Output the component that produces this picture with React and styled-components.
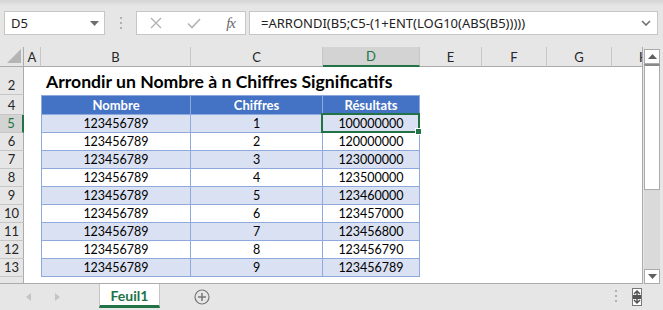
import React from 'react';
import styled, { createGlobalStyle } from 'styled-components';

const GRID = '24px 17px 150px 132px 97px 62px 65px 65px 65px';
const LETTERS = ['A', 'B', 'C', 'D', 'E', 'F', 'G', 'H'];
const ROWS = [
	['123456789', '1', '100000000'],
	['123456789', '2', '120000000'],
	['123456789', '3', '123000000'],
	['123456789', '4', '123500000'],
	['123456789', '5', '123460000'],
	['123456789', '6', '123457000'],
	['123456789', '7', '123456800'],
	['123456789', '8', '123456790'],
	['123456789', '9', '123456789'],
];

const GlobalStyle = createGlobalStyle`
	html, body {
		margin: 0;
		padding: 0;
		background: #e6e6e6;
	}
	* { box-sizing: border-box; }
`;

export default function App() {
	return (
		<Window>
			<GlobalStyle />
			<FormulaBar>
				<NameBox>
					<span>D5</span>
					<svg width="9" height="5" viewBox="0 0 9 5"><path d="M0 0h9L4.5 5z" fill="#6f6f6f" /></svg>
				</NameBox>
				<Grip><i /><i /><i /></Grip>
				<IconBox>
					<svg width="12" height="12" viewBox="0 0 12 12"><path d="M1 1l10 10M11 1L1 11" stroke="#b3b3b3" strokeWidth="1.4" /></svg>
					<svg width="14" height="12" viewBox="0 0 14 12"><path d="M1 6.5l4 4L13 2" stroke="#b3b3b3" strokeWidth="1.6" fill="none" /></svg>
					<Fx>fx</Fx>
				</IconBox>
				<FormulaInput>
					<span>=ARRONDI(B5;C5-(1+ENT(LOG10(ABS(B5)))))</span>
					<svg width="10" height="6" viewBox="0 0 10 6"><path d="M1 1l4 4 4-4" stroke="#6f6f6f" strokeWidth="1.6" fill="none" /></svg>
				</FormulaInput>
			</FormulaBar>

			<SheetArea>
				<Grid>
					<Row $h={20}>
						<Corner><svg width="14" height="14" viewBox="0 0 14 14"><path d="M14 0v14H0z" fill="#b5b5b5" /></svg></Corner>
						{LETTERS.map((l) => (
							<ColHead key={l} $active={l === 'D'}>{l}</ColHead>
						))}
					</Row>
					<Row $h={28}>
						<RowHead>2</RowHead>
						<Cell />
						<Title>Arrondir un Nombre à n Chiffres Significatifs</Title>
					</Row>
					<Row $h={20}>
						<RowHead>4</RowHead>
						<Cell />
						<HeadCell $first>Nombre</HeadCell>
						<HeadCell>Chiffres</HeadCell>
						<HeadCell>Résultats</HeadCell>
					</Row>
					{ROWS.map((r, i) => (
						<Row $h={18} key={i}>
							<RowHead $active={i === 0}>{i + 5}</RowHead>
							<Cell />
							<DataCell $band={i % 2 === 0} $first>{r[0]}</DataCell>
							<DataCell $band={i % 2 === 0}>{r[1]}</DataCell>
							<DataCell $band={i % 2 === 0} $selected={i === 0}>{r[2]}</DataCell>
						</Row>
					))}
					<Row $h={7}>
						<RowHead />
					</Row>
				</Grid>
				<VScroll>
					<ScrollBtn><svg width="9" height="5" viewBox="0 0 9 5"><path d="M0 5h9L4.5 0z" fill="#606060" /></svg></ScrollBtn>
					<Thumb />
					<Track />
					<ScrollBtn><svg width="9" height="5" viewBox="0 0 9 5"><path d="M0 0h9L4.5 5z" fill="#606060" /></svg></ScrollBtn>
				</VScroll>
			</SheetArea>

			<TabBar>
				<NavArrows>
					<svg width="5" height="8" viewBox="0 0 5 8"><path d="M5 0v8L0 4z" fill="#c4c4c4" /></svg>
					<svg width="5" height="8" viewBox="0 0 5 8"><path d="M0 0v8l5-4z" fill="#c4c4c4" /></svg>
				</NavArrows>
				<Tab>Feuil1</Tab>
				<AddSheet>
					<svg width="16" height="16" viewBox="0 0 16 16">
						<circle cx="8" cy="8" r="7" fill="none" stroke="#777" strokeWidth="1.2" />
						<path d="M8 4v8M4 8h8" stroke="#777" strokeWidth="1.5" />
					</svg>
				</AddSheet>
				<Spacer />
				<Grip $h><i /><i /><i /></Grip>
				<SplitIcon>
					<svg width="10" height="18" viewBox="0 0 10 18">
						<rect x="0.5" y="0.5" width="9" height="17" fill="#fff" stroke="#777" />
						<path d="M5 3v12M2 6l3-3 3 3M2 12l3 3 3-3" stroke="#555" strokeWidth="1.5" fill="none" />
						<rect x="1" y="7" width="8" height="4" fill="#555" />
					</svg>
				</SplitIcon>
			</TabBar>
		</Window>
	);
}

const Window = styled.div`
	width: 663px;
	height: 310px;
	display: flex;
	flex-direction: column;
	overflow: hidden;
	background: #e6e6e6;
	font-family: Lato, "Liberation Sans", sans-serif;
`;

const FormulaBar = styled.div`
	height: 47px;
	display: flex;
	align-items: flex-start;
	padding: 11px 5px 0 4px;
	background: linear-gradient(#d4d4d4 0px, #e6e6e6 6px);
`;

const NameBox = styled.div`
	width: 101px;
	height: 24px;
	background: #fff;
	border: 1px solid #c6c6c6;
	display: flex;
	align-items: center;
	justify-content: space-between;
	padding: 0 5px 0 6px;
	font-family: "Noto Sans", sans-serif;
	font-size: 13px;
	color: #222;
`;

const Grip = styled.div`
	width: ${(p) => (p.$h ? '4px' : '31px')};
	height: 24px;
	display: flex;
	flex-direction: column;
	align-items: center;
	justify-content: center;
	gap: 3px;
	margin-right: ${(p) => (p.$h ? '14px' : '0')};

	i {
		width: 2px;
		height: 2px;
		background: #b0b0b0;
	}
`;

const IconBox = styled.div`
	width: 110px;
	height: 24px;
	background: #fff;
	border: 1px solid #c6c6c6;
	display: flex;
	align-items: center;
	justify-content: space-between;
	padding: 0 10px 0 13px;
	margin-right: 3px;
`;

const Fx = styled.span`
	font-family: "Liberation Serif", serif;
	font-style: italic;
	font-size: 15px;
	color: #666;
	letter-spacing: -1px;
`;

const FormulaInput = styled.div`
	flex: 1;
	height: 24px;
	background: #fff;
	border: 1px solid #c6c6c6;
	display: flex;
	align-items: center;
	justify-content: space-between;
	padding: 0 6px 0 11px;
	font-family: "Noto Sans", sans-serif;
	font-size: 13px;
	color: #222;
`;

const SheetArea = styled.div`
	height: 237px;
	display: flex;
`;

const Grid = styled.div`
	width: 643px;
	overflow: hidden;
	background: #fff;
	border-right: 1px solid #ababab;
	border-bottom: 1px solid #ababab;
`;

const Row = styled.div`
	display: grid;
	grid-template-columns: ${GRID};
	height: ${(p) => p.$h}px;
	width: 677px;
`;

const Corner = styled.div`
	background: #e6e6e6;
	border-right: 1px solid #ababab;
	border-bottom: 1px solid #ababab;
	display: flex;
	align-items: flex-end;
	justify-content: flex-end;
	padding: 0 2px 3px 0;
`;

const ColHead = styled.div`
	background: ${(p) => (p.$active ? '#d3d3d3' : '#e6e6e6')};
	color: ${(p) => (p.$active ? '#217346' : '#262626')};
	border-right: 1px solid #c6c6c6;
	border-bottom: ${(p) => (p.$active ? '2px solid #217346' : '1px solid #ababab')};
	display: flex;
	align-items: center;
	justify-content: center;
	font-size: 13px;
`;

const RowHead = styled.div`
	background: ${(p) => (p.$active ? '#d3d3d3' : '#e6e6e6')};
	color: ${(p) => (p.$active ? '#217346' : '#262626')};
	border-right: ${(p) => (p.$active ? '2px solid #217346' : '1px solid #ababab')};
	border-bottom: 1px solid #c6c6c6;
	display: flex;
	align-items: flex-end;
	justify-content: center;
	padding-bottom: 1px;
	font-size: 13px;
`;

const Cell = styled.div``;

const Title = styled.div`
	grid-column: 3 / span 7;
	display: flex;
	align-items: flex-end;
	padding: 0 0 3px 5px;
	font-weight: 700;
	font-size: 17.6px;
	color: #000;
	white-space: nowrap;
`;

const HeadCell = styled.div`
	background: #4472c4;
	color: #fff;
	font-weight: 700;
	font-size: 13px;
	display: flex;
	align-items: flex-end;
	justify-content: center;
	padding-bottom: 1px;
	border-top: 1px solid #8ea9db;
	border-right: 1px solid #8ea9db;
	border-bottom: 1px solid #8ea9db;
	border-left: ${(p) => (p.$first ? '1px solid #8ea9db' : 'none')};
`;

const DataCell = styled.div`
	position: relative;
	background: ${(p) => (p.$band ? '#d9e1f2' : '#fff')};
	color: #000;
	font-size: 12.5px;
	display: flex;
	align-items: flex-end;
	justify-content: center;
	padding-bottom: 1px;
	border-right: 1px solid #8ea9db;
	border-bottom: 1px solid #8ea9db;
	border-left: ${(p) => (p.$first ? '1px solid #8ea9db' : 'none')};

	${(p) =>
		p.$selected &&
		`
		&::after {
			content: '';
			position: absolute;
			inset: -2px -1px -1px -2px;
			border: 2px solid #217346;
		}
		&::before {
			content: '';
			position: absolute;
			right: -3px;
			bottom: -3px;
			width: 5px;
			height: 5px;
			background: #217346;
			border: 1px solid #fff;
			z-index: 2;
		}
	`}
`;

const VScroll = styled.div`
	flex: 1;
	display: flex;
	flex-direction: column;
	padding: 2px 3px 0 1px;
`;

const ScrollBtn = styled.div`
	height: 15px;
	background: #fff;
	border: 1px solid #ababab;
	display: flex;
	align-items: center;
	justify-content: center;
`;

const Thumb = styled.div`
	height: 126px;
	background: #fff;
	border: 1px solid #ababab;
	border-top: 2px solid #8a8a8a;
`;

const Track = styled.div`
	flex: 1;
	background: #dadada;
`;

const TabBar = styled.div`
	flex: 1;
	display: flex;
	align-items: stretch;
`;

const NavArrows = styled.div`
	width: 99px;
	display: flex;
	align-items: center;
	gap: 24px;
	padding-left: 26px;
`;

const Tab = styled.div`
	width: 61px;
	background: #fff;
	border-left: 1px solid #c6c6c6;
	border-right: 1px solid #c6c6c6;
	border-bottom: 3px solid #217346;
	margin-bottom: 2px;
	color: #217346;
	font-weight: 700;
	font-size: 14px;
	display: flex;
	align-items: center;
	justify-content: center;
	padding-top: 1px;
`;

const AddSheet = styled.div`
	display: flex;
	align-items: center;
	margin-left: 34px;
`;

const Spacer = styled.div`
	flex: 1;
`;

const SplitIcon = styled.div`
	display: flex;
	align-items: center;
	margin-right: 21px;
`;
